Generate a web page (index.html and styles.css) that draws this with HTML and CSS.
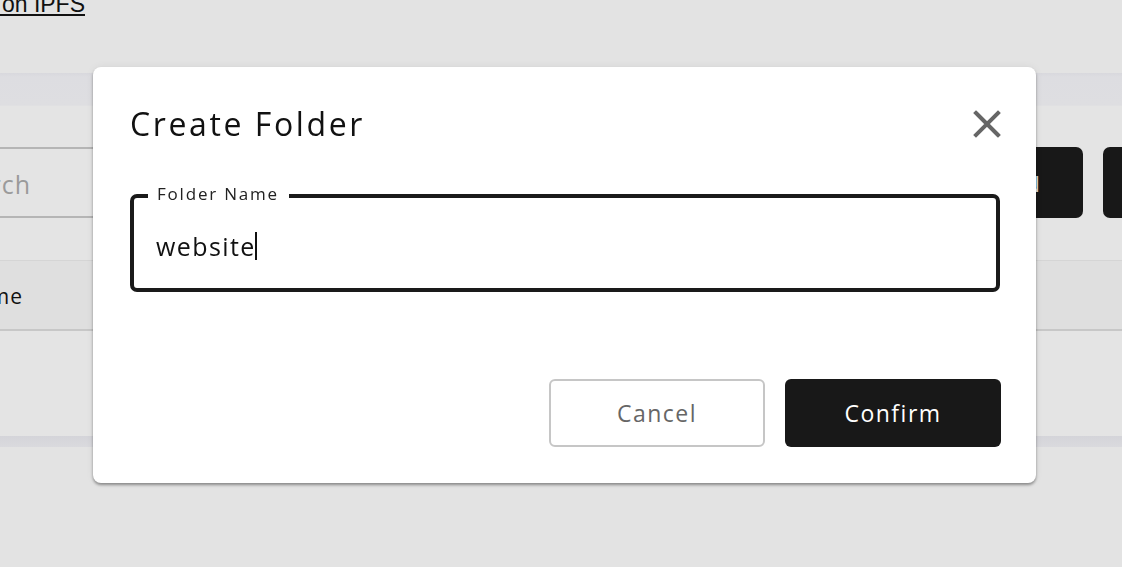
FILE: index.html
```html
<!DOCTYPE html>
<html lang="en">
<head>
<meta charset="utf-8">
<title>Create Folder</title>
<link rel="stylesheet" href="styles.css">
</head>
<body>
<div class="page">
  <div class="top-line">
    <div class="cut cut-link"><a href="#" class="ipfs-link">Hosted on IPFS</a></div>
  </div>
  <section class="card">
    <div class="card-band"></div>
    <div class="toolbar">
      <div class="search">
        <div class="cut cut-search"><span class="search-ph">Search</span></div>
      </div>
      <div class="tool-buttons">
        <button class="tool-btn tool-btn-main">OPEN</button>
        <button class="tool-btn tool-btn-second">NEW</button>
      </div>
    </div>
    <div class="table-head">
      <div class="cut cut-name"><span class="col-name">Name</span></div>
    </div>
    <div class="table-body"></div>
    <div class="card-foot"></div>
  </section>
</div>

<div class="modal" role="dialog" aria-labelledby="modal-title">
  <div class="modal-head">
    <h2 id="modal-title" class="modal-title">Create Folder</h2>
    <button class="close-btn" aria-label="Close">
      <svg width="28" height="28" viewBox="0 0 28 28"><path d="M3 3 L25 25 M25 3 L3 25" stroke="#666" stroke-width="4" stroke-linecap="square" fill="none"/></svg>
    </button>
  </div>
  <div class="field">
    <span class="field-label">Folder Name</span>
    <div class="field-input">website<span class="caret"></span></div>
  </div>
  <div class="actions">
    <button class="btn btn-cancel">Cancel</button>
    <button class="btn btn-confirm">Confirm</button>
  </div>
</div>
</body>
</html>
```

FILE: styles.css
```css
* { box-sizing: border-box; }
html, body { margin: 0; padding: 0; }
body {
  background: #e3e3e3;
  font-family: "Open Sans", "DejaVu Sans", sans-serif;
  color: #111;
  overflow: hidden;
  height: 567px;
}
.page { width: 1122px; }
.cut { display: flex; justify-content: flex-end; white-space: nowrap; }
.top-line { height: 82px; margin-top: -9px; }
.cut-link { width: 85px; }
.ipfs-link {
  color: #111;
  font-family: "Liberation Sans", Arial, sans-serif;
  font-size: 23px;
  line-height: 26px;
  text-decoration: underline;
}

.card {
  background: #e4e4e4;
  width: 1122px;
}
.card-band {
  height: 33px;
  background: linear-gradient(#d8d8dd, #dddde1 4px, #dedee1);
  border-bottom: 1px solid #e0e0e2;
}
.toolbar {
  margin-top: 41px;
  height: 71px;
  display: flex;
  justify-content: space-between;
}
.search {
  width: 500px;
  border-top: 2px solid #b5b5b5;
  border-bottom: 2px solid #b5b5b5;
  display: flex;
  align-items: center;
  padding-top: 3px;
}
.cut-search { width: 31px; }
.search-ph { color: #9a9a9a; font-size: 25px; letter-spacing: 1px; }
.tool-buttons { display: flex; gap: 20px; margin-right: -81px; }
.tool-btn {
  height: 71px;
  border: none;
  border-radius: 7px;
  background: #181818;
  color: #e8e8e8;
  font-family: inherit;
  font-size: 22px;
}
.tool-btn-main { width: 150px; text-align: right; padding: 0 43px 0 0; }
.tool-btn-second { width: 100px; text-align: left; padding: 0 0 0 40px; }
.table-head {
  margin-top: 42px;
  height: 71px;
  background: #dfdfdf;
  border-top: 1px solid #d5d5d5;
  border-bottom: 2px solid #c7c7c7;
  display: flex;
  align-items: center;
  padding-top: 2px;
}
.cut-name { width: 23px; }
.col-name { font-size: 21px; color: #111; letter-spacing: 1px; }
.table-body { height: 105px; }
.card-foot {
  height: 11px;
  background: linear-gradient(#d4d4d9, #dadade);
}

.modal {
  position: fixed;
  left: 93px;
  top: 67px;
  width: 943px;
  height: 416px;
  background: #fff;
  border-radius: 8px;
  box-shadow: 0 2px 3px rgba(0,0,0,0.38), 0 0 8px rgba(0,0,0,0.06);
  padding: 37px 35px 36px 37px;
  display: flex;
  flex-direction: column;
}
.modal-head {
  display: flex;
  align-items: center;
  justify-content: space-between;
  height: 40px;
}
.modal-title {
  margin: 0;
  font-size: 32px;
  line-height: 40px;
  font-weight: 400;
  letter-spacing: 2.6px;
  color: #111;
}
.close-btn {
  width: 28px;
  height: 28px;
  padding: 0;
  border: none;
  background: none;
  display: flex;
}
.field {
  position: relative;
  margin-top: 50px;
  margin-right: 1px;
  height: 98px;
  border: 4px solid #1a1a1a;
  border-radius: 7px;
}
.field-label {
  position: absolute;
  top: -15px;
  left: 14px;
  padding: 0 10px 0 9px;
  background: #fff;
  font-size: 17px;
  line-height: 22px;
  letter-spacing: 1.8px;
  color: #222;
}
.field-input {
  padding: 31px 0 0 22px;
  font-size: 25px;
  line-height: 34px;
  letter-spacing: 1.4px;
  color: #111;
  display: flex;
  align-items: center;
}
.caret {
  display: inline-block;
  width: 2px;
  height: 28px;
  background: #111;
  margin-left: -1px;
}
.actions {
  margin-top: auto;
  display: flex;
  justify-content: flex-end;
  gap: 20px;
}
.btn {
  width: 216px;
  height: 68px;
  border-radius: 6px;
  font-family: inherit;
  font-size: 23px;
  letter-spacing: 1.5px;
}
.btn-cancel {
  background: #fff;
  border: 2px solid #c6c6c6;
  color: #666;
}
.btn-confirm {
  background: #181818;
  border: none;
  color: #fff;
}
```
